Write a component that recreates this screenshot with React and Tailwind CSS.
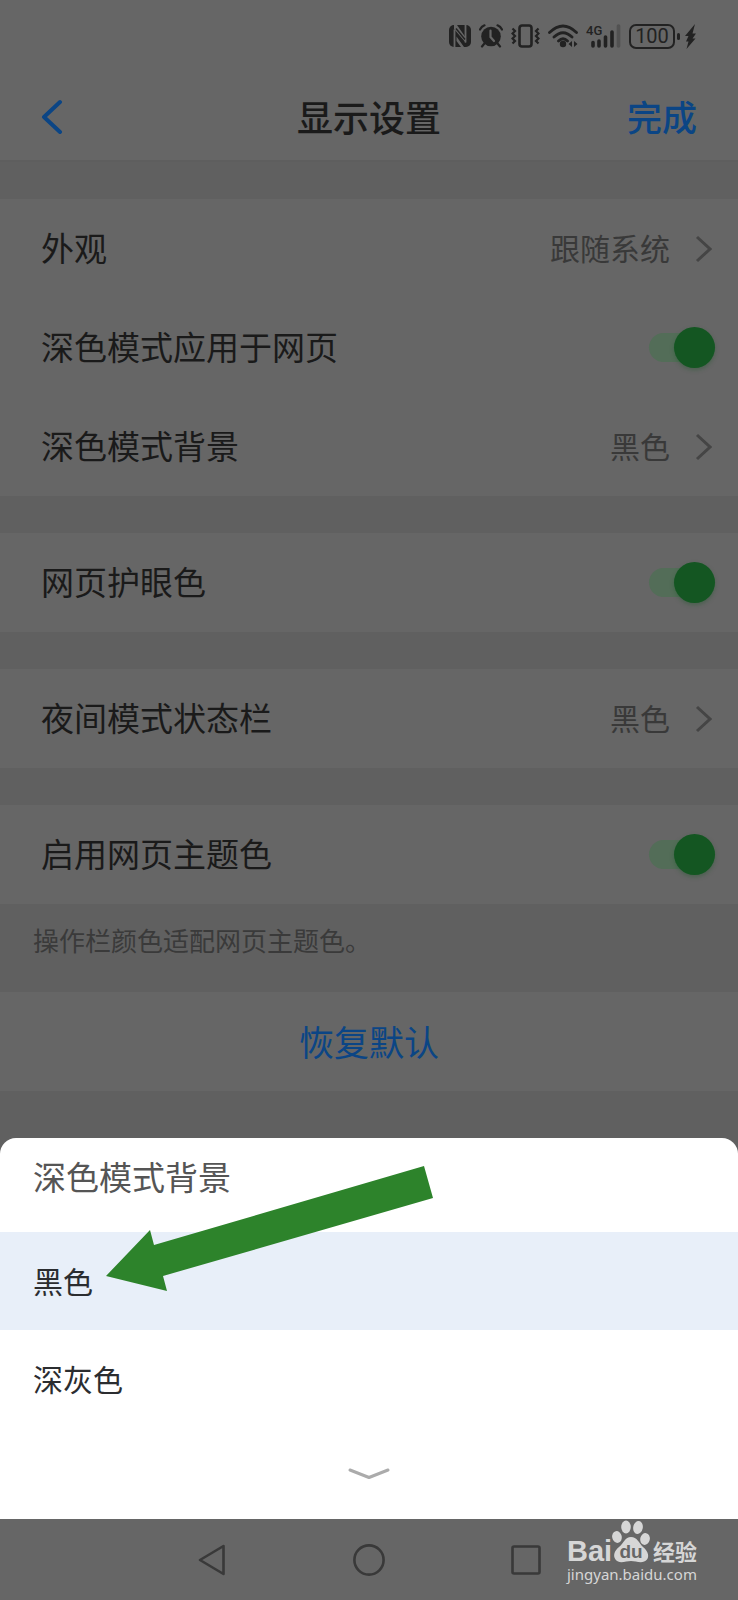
import { useState } from "react";

const BatteryIcon = () => (
  <div className="flex items-center gap-[2px]">
    <span className="flex h-[25px] w-[46px] items-center justify-center rounded-[7px] border-2 border-[#222] font-['Roboto',sans-serif] text-[20px] leading-[20px]">
      100
    </span>
    <span className="h-[7px] w-[3px] rounded-sm bg-[#222]"></span>
  </div>
);

const StatusBar = () => (
  <div className="flex h-[72px] items-center justify-end pr-[42px] text-[#222]">
    {/* NFC */}
    <svg width="22" height="22" viewBox="0 0 22 22" aria-hidden="true">
      <rect width="22" height="22" rx="5" fill="#222" />
      <path
        d="M5.500 22V4.500M16.500 0v17.500"
        stroke="#666"
        strokeWidth="1.800"
        fill="none"
      />
      <path d="M5 0h3l9 13v5L5 4zM7.500 11.500l7.500 10.500h-3L7.500 16z" fill="#666" />
      <path d="M7 3.500l9 11" stroke="#222" strokeWidth="1.400" fill="none" />
    </svg>
    {/* Alarm */}
    <svg className="ml-[8px]" width="24" height="24" viewBox="0 0 24 24" aria-hidden="true">
      <circle cx="12" cy="12.500" r="9.800" fill="#222" />
      <path
        d="M1 5.500Q2.500 2.500 5.500 1.300M23 5.500Q21.500 2.500 18.500 1.300M5 20l-2 2.500M19 20l2 2.500"
        stroke="#222"
        strokeWidth="2.200"
        strokeLinecap="round"
        fill="none"
      />
      <path d="M11.500 6.500v6.500l3.500 4" stroke="#666" strokeWidth="2.200" strokeLinecap="round" fill="none" />
    </svg>
    {/* Vibrate */}
    <svg className="ml-[8px]" width="29" height="24" viewBox="0 0 29 24" fill="none" stroke="#222" aria-hidden="true">
      <rect x="8.500" y="1.500" width="12" height="21" rx="2.500" strokeWidth="2.600" />
      <path
        d="M1.500 4.500L4 7l-2.500 2.500L4 12l-2.500 2.500L4 17l-2.500 2.500M27.500 4.500L25 7l2.500 2.500L25 12l2.500 2.500L25 17l2.500 2.500"
        strokeWidth="2.200"
      />
    </svg>
    {/* Wi-Fi */}
    <svg className="ml-[8px]" width="31" height="24" viewBox="0 0 31 24" fill="none" stroke="#222" aria-hidden="true">
      <path
        d="M1.500 8.500Q15 -4.500 28.500 8.500M6 13Q15 4.500 24 13M10.500 17Q15 12.500 19.500 17"
        strokeWidth="2.800"
        strokeLinecap="round"
      />
      <circle cx="15" cy="20" r="3.200" fill="#222" stroke="none" />
      <path d="M24 17v6l-3.500-3zM26 17v6l3.500-3z" fill="#222" stroke="none" />
    </svg>
    {/* Mobile signal */}
    <svg className="ml-[7px]" width="35" height="24" viewBox="0 0 35 24" aria-hidden="true">
      <text x="0" y="11" fontSize="13" fontWeight="500" fontFamily="Roboto, sans-serif" fill="#222">
        4G
      </text>
      <path d="M7 18.500v3.500M13 17v5M19.500 13v9M26 8v14" stroke="#222" strokeWidth="3.600" strokeLinecap="round" />
      <path d="M32.500 2v20" stroke="#525252" strokeWidth="3.600" strokeLinecap="round" />
    </svg>
    <div className="ml-[8px]">
      <BatteryIcon />
    </div>
    {/* Charging bolt */}
    <svg className="ml-[5px]" width="11" height="25" viewBox="0 0 11 25" aria-hidden="true">
      <path d="M10 0L0 12h3.500L1 17.500h2.500L1.500 25 10.500 14.500H7.500L11 9.500H7.500z" fill="#222" />
    </svg>
  </div>
);

const Chevron = () => (
  <svg width="17" height="28" viewBox="0 0 17 28" fill="none" aria-hidden="true">
    <path d="M2 2l13 12L2 26" stroke="#454545" strokeWidth="3" />
  </svg>
);

const LinkRow = ({ label, value }) => (
  <button type="button" className="flex h-[99px] w-full items-center pr-[26px] pl-[41px] text-left">
    <span className="flex-1 pb-[2px] text-[33px] text-[#1a1a1a]">{label}</span>
    <span className="mr-[25px] pb-[2px] text-[30px] text-[#393939]">{value}</span>
    <Chevron />
  </button>
);

const SwitchRow = ({ label }) => {
  const [on, setOn] = useState(true);

  return (
    <label className="flex h-[99px] w-full items-center pr-[23px] pl-[41px]">
      <span className="flex-1 pb-[2px] text-[33px] text-[#1a1a1a]">{label}</span>
      <input
        type="checkbox"
        role="switch"
        checked={on}
        onChange={(e) => setOn(e.target.checked)}
        className="peer sr-only"
      />
      <span className="flex h-[29px] w-[66px] items-center rounded-full bg-[#5c5c5c] peer-checked:justify-end peer-checked:bg-[#536d58] peer-checked:[&>span]:bg-[#145622]">
        <span className="h-[41px] w-[41px] rounded-full bg-[#505050] shadow-[0_2px_4px_rgba(20,86,34,0.35)]"></span>
      </span>
    </label>
  );
};

const Group = ({ children }) => <section className="bg-[#666]">{children}</section>;

const options = ["黑色", "深灰色"];

const BottomSheet = () => {
  const [selected, setSelected] = useState("黑色");

  return (
    <div className="relative rounded-t-[16px] bg-white">
      <h2 className="px-[33px] pt-[21px] pb-[39px] text-[33px] leading-[34px] text-[#555]">
        深色模式背景
      </h2>
      {options.map((option) => (
        <button
          key={option}
          type="button"
          onClick={() => setSelected(option)}
          className={`flex h-[98px] w-full items-center px-[33px] pb-[2px] text-[30px] text-[#2b2d30] ${
            selected === option ? "bg-[#e8eff9]" : "bg-white"
          }`}
        >
          {option}
        </button>
      ))}
      <button type="button" aria-label="收起" className="flex h-[91px] w-full items-center justify-center">
        <svg width="42" height="12" viewBox="0 0 42 12" fill="none" aria-hidden="true">
          <path
            d="M2 2l19 7.500L40 2"
            stroke="#ababab"
            strokeWidth="3"
            strokeLinecap="round"
            strokeLinejoin="round"
          />
        </svg>
      </button>

      {/* Arrow pointing at the selected option */}
      <svg
        className="pointer-events-none absolute top-[28px] left-[106px]"
        width="328"
        height="126"
        viewBox="0 0 328 126"
        aria-hidden="true"
      >
        <path d="M318 0L327 32 57 110 61 125 0 110 44 64 48 79z" fill="#2d832b" />
      </svg>
    </div>
  );
};

const Watermark = () => (
  <div className="pointer-events-none absolute right-[39px] bottom-[15px] text-[#d6d6d6]">
    <svg className="overflow-visible" width="132" height="44" viewBox="0 0 132 44" fill="#d6d6d6" aria-hidden="true">
      <text x="0" y="42" fontSize="29" fontWeight="700" fontFamily="Liberation Sans, sans-serif">
        Bai
      </text>
      <g transform="translate(44 0)">
        <ellipse cx="6" cy="18" rx="4.800" ry="6" transform="rotate(-12 6 18)" />
        <ellipse cx="15" cy="8" rx="4.800" ry="6.500" />
        <ellipse cx="27" cy="8.500" rx="4.800" ry="6.500" transform="rotate(10 27 8.500)" />
        <ellipse cx="34" cy="20" rx="4.800" ry="6" transform="rotate(12 34 20)" />
        <path d="M20 18C26 18 28 24 32 28C38 33 38 38 36 40.500C32 45.500 25 42 20 42C15 42 8 45.500 4.500 40.500C2 37 3 32 8 28C13 24 14 18 20 18Z" />
        <text
          x="20"
          y="39"
          textAnchor="middle"
          fontSize="19"
          fontWeight="700"
          fontFamily="Liberation Sans, sans-serif"
          fill="#666"
        >
          du
        </text>
      </g>
      <text x="86" y="41" fontSize="22" fontWeight="700" fontFamily="Noto Sans CJK SC, sans-serif">
        经验
      </text>
    </svg>
    <div className="font-['Noto_Sans',sans-serif] text-[15px] leading-[22px]">jingyan.baidu.com</div>
  </div>
);

const NavBar = () => (
  <nav className="relative h-[81px] bg-[#666]">
    <div className="grid h-full grid-cols-3 items-center justify-items-center px-[18%]">
      <button type="button" aria-label="返回">
        <svg width="28" height="32" viewBox="0 0 28 32" fill="none" aria-hidden="true">
          <path d="M25.500 2v28L2 16z" stroke="#393939" strokeWidth="2.600" strokeLinejoin="round" />
        </svg>
      </button>
      <button type="button" aria-label="主屏幕">
        <svg width="32" height="32" viewBox="0 0 32 32" fill="none" aria-hidden="true">
          <circle cx="16" cy="16" r="14.600" stroke="#393939" strokeWidth="2.600" />
        </svg>
      </button>
      <button type="button" aria-label="最近任务">
        <svg width="30" height="30" viewBox="0 0 30 30" fill="none" aria-hidden="true">
          <rect x="1.500" y="1.500" width="27" height="27" rx="1.500" stroke="#393939" strokeWidth="2.600" />
        </svg>
      </button>
    </div>
    <Watermark />
  </nav>
);

export default function App() {
  return (
    <div className="flex min-h-screen flex-col bg-[#606060] font-['Noto_Sans_CJK_SC',sans-serif]">
      <header className="border-b-2 border-[#5e5e5e] bg-[#666]">
        <StatusBar />
        <div className="grid h-[88px] grid-cols-3 items-center px-[41px]">
          <button type="button" aria-label="返回" className="justify-self-start">
            <svg width="22" height="36" viewBox="0 0 22 36" fill="none" aria-hidden="true">
              <path
                d="M19 4L3 19l16 15"
                stroke="#0b4585"
                strokeWidth="4"
                strokeLinecap="round"
                strokeLinejoin="round"
              />
            </svg>
          </button>
          <h1 className="text-center text-[36px] font-medium text-[#1a1a1a]">显示设置</h1>
          <button type="button" className="justify-self-end text-[35px] font-medium text-[#0b4585]">
            完成
          </button>
        </div>
      </header>

      <main className="flex flex-1 flex-col gap-[37px] pt-[37px] pb-[47px]">
        <Group>
          <LinkRow label="外观" value="跟随系统" />
          <SwitchRow label="深色模式应用于网页" />
          <LinkRow label="深色模式背景" value="黑色" />
        </Group>
        <Group>
          <SwitchRow label="网页护眼色" />
        </Group>
        <Group>
          <LinkRow label="夜间模式状态栏" value="黑色" />
        </Group>
        <div>
          <Group>
            <SwitchRow label="启用网页主题色" />
          </Group>
          <p className="px-[33px] pt-[20px] pb-[36px] text-[26px] leading-[32px] text-[#3a3a3a]">
            操作栏颜色适配网页主题色。
          </p>
          <Group>
            <button type="button" className="h-[99px] w-full text-[35px] text-[#0b4585]">
              恢复默认
            </button>
          </Group>
        </div>
      </main>

      <BottomSheet />
      <NavBar />
    </div>
  );
}
